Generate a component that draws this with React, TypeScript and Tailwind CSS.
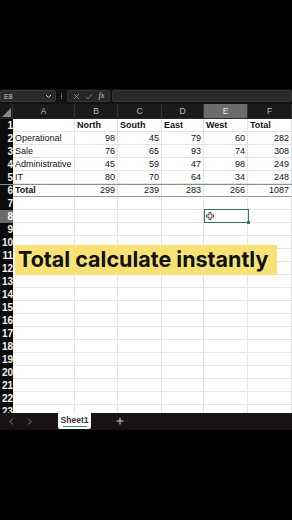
import React from "react";

const W = [13, 62, 43, 44, 42, 44, 44];
const COLS = ["A", "B", "C", "D", "E", "F"];

type Cell = { t: string; b?: boolean; r?: boolean };
const data: Cell[][] = [
  [{ t: "" }, { t: "North", b: true }, { t: "South", b: true }, { t: "East", b: true }, { t: "West", b: true }, { t: "Total", b: true }],
  [{ t: "Operational" }, { t: "98", r: true }, { t: "45", r: true }, { t: "79", r: true }, { t: "60", r: true }, { t: "282", r: true }],
  [{ t: "Sale" }, { t: "76", r: true }, { t: "65", r: true }, { t: "93", r: true }, { t: "74", r: true }, { t: "308", r: true }],
  [{ t: "Administrative" }, { t: "45", r: true }, { t: "59", r: true }, { t: "47", r: true }, { t: "98", r: true }, { t: "249", r: true }],
  [{ t: "IT" }, { t: "80", r: true }, { t: "70", r: true }, { t: "64", r: true }, { t: "34", r: true }, { t: "248", r: true }],
  [{ t: "Total", b: true }, { t: "299", r: true }, { t: "239", r: true }, { t: "283", r: true }, { t: "266", r: true }, { t: "1087", r: true }],
];

export default function App() {
  const rows = Array.from({ length: 23 }, (_, i) => i + 1);
  return (
    <div className="w-[292px] h-[520px] bg-black overflow-hidden flex flex-col" style={{ fontFamily: '"Liberation Sans", Arial, sans-serif' }}>
      <div className="h-[89px] shrink-0 bg-black" />
      {/* formula bar */}
      <div className="h-[15px] shrink-0 flex items-start bg-[#111111] pt-[1px]">
        <div className="w-[56px] h-[12px] bg-[#2a2a2a] border border-[#3a3a3a] rounded-[2px] flex items-center justify-between px-[3px]">
          <span className="text-[7px] text-[#cfcfcf] leading-none">E8</span>
          <svg width="7" height="5" viewBox="0 0 7 5"><path d="M1 1l2.5 2.5L6 1" stroke="#cfcfcf" strokeWidth="1" fill="none" /></svg>
        </div>
        <div className="w-[11px] h-[12px] flex flex-col items-center justify-center gap-[1px]">
          <div className="w-[1.5px] h-[1.5px] bg-[#aaa] rounded-full" />
          <div className="w-[1.5px] h-[1.5px] bg-[#aaa] rounded-full" />
          <div className="w-[1.5px] h-[1.5px] bg-[#aaa] rounded-full" />
        </div>
        <div className="w-[43px] h-[12px] bg-[#262626] border border-[#363636] rounded-[2px] flex items-center justify-around px-[2px]">
          <svg width="7" height="7" viewBox="0 0 7 7"><path d="M1 1l5 5M6 1l-5 5" stroke="#8a8a8a" strokeWidth="0.9" /></svg>
          <svg width="8" height="7" viewBox="0 0 8 7"><path d="M1 3.8l2 2L7 1" stroke="#8a8a8a" strokeWidth="0.9" fill="none" /></svg>
          <span className="text-[8px] italic text-[#cfcfcf] leading-none" style={{ fontFamily: '"Liberation Serif", serif' }}>fx</span>
        </div>
        <div className="flex-1 h-[12px] ml-[2px] bg-[#2a2a2a] border border-[#363636] rounded-[2px]" />
      </div>
      {/* column headers */}
      <div className="h-[15px] shrink-0 flex bg-[#1a1a1a] border-b border-[#2a2a2a]">
        <div className="relative h-full border-r border-[#333]" style={{ width: W[0] }}>
          <svg className="absolute right-[1px] bottom-[1px]" width="9" height="9" viewBox="0 0 9 9"><path d="M9 0V9H0Z" fill="#8a8a8a" /></svg>
        </div>
        {COLS.map((c, i) => (
          <div
            key={c}
            className={`h-full flex items-center justify-center text-[8.5px] border-r border-[#333] ${c === "E" ? "bg-[#6b6b6b] text-[#e8e8e8]" : "text-[#bdbdbd]"}`}
            style={{ width: W[i + 1] }}
          >
            {c}
          </div>
        ))}
      </div>
      {/* grid */}
      <div className="relative h-[294px] shrink-0 overflow-hidden">
        {rows.map((r) => {
          const d = data[r - 1];
          const isTotal = r === 6;
          return (
            <div key={r} className={`flex h-[13px] ${isTotal ? "border-t border-[#8f8f8f]" : ""}`}>
              <div
                className={`h-full overflow-hidden flex items-center justify-end text-[10px] font-bold leading-none ${r === 8 ? "bg-[#6b6b6b] text-white" : "bg-[#0b0b0b] text-[#f2f2f2]"}`}
                style={{ width: W[0] }}
              >
                <span className="whitespace-nowrap">{r}</span>
              </div>
              {COLS.map((c, i) => {
                const cell = d ? d[i] : undefined;
                return (
                  <div
                    key={c}
                    className={`h-full bg-white border-r border-b flex items-center px-[2px] text-[9px] leading-none text-[#111] whitespace-nowrap overflow-hidden ${isTotal ? "border-b-[#9a9a9a]" : "border-b-[#e3e3e3]"} border-r-[#e3e3e3] ${cell?.r ? "justify-end" : "justify-start"} ${cell?.b ? "font-bold" : ""}`}
                    style={{ width: W[i + 1] }}
                  >
                    {cell?.t}
                  </div>
                );
              })}
            </div>
          );
        })}
        {/* selected cell E8 */}
        <div className="absolute left-[204px] top-[90px] w-[45px] h-[14px] border border-[#2f7a55]">
          <div className="absolute -right-[2px] -bottom-[2px] w-[3px] h-[3px] bg-[#2f7a55]" />
          <svg className="absolute left-[1px] top-[2px]" width="8" height="8" viewBox="0 0 8 8">
            <path d="M3 0.5h2v2.5h2.5v2H5v2.5H3V5H0.5V3H3Z" fill="white" stroke="#222" strokeWidth="0.8" />
          </svg>
        </div>
        {/* banner */}
        <div className="absolute left-[15px] top-[126px] w-[262px] h-[30px] bg-[#f8e275] flex items-center pl-[3px]">
          <span className="text-[21.5px] font-bold text-[#111] leading-none whitespace-nowrap" style={{ fontFamily: 'Inter, "Noto Sans", sans-serif' }}>
            Total calculate instantly
          </span>
        </div>
      </div>
      {/* sheet tabs bar */}
      <div className="h-[17px] shrink-0 bg-[#1a1215] flex items-center relative">
        <svg className="absolute left-[9px] top-[5px]" width="5" height="7" viewBox="0 0 5 7"><path d="M4 0.5L1 3.5L4 6.5" stroke="#8a8a8a" strokeWidth="0.9" fill="none" /></svg>
        <svg className="absolute left-[27px] top-[5px]" width="5" height="7" viewBox="0 0 5 7"><path d="M1 0.5L4 3.5L1 6.5" stroke="#8a8a8a" strokeWidth="0.9" fill="none" /></svg>
        <div className="absolute left-[58px] top-0 w-[33px] h-[16px] bg-white rounded-b-[2px] flex flex-col items-center justify-center">
          <span className="text-[8.5px] font-bold text-[#333] leading-none mt-[1px]">Sheet1</span>
          <div className="w-[24px] h-[1px] bg-[#3a8a68] mt-[2px]" />
        </div>
        <svg className="absolute left-[116px] top-[4px]" width="8" height="8" viewBox="0 0 8 8"><path d="M4 0.5v7M0.5 4h7" stroke="#d0d0d0" strokeWidth="1" /></svg>
      </div>
      <div className="flex-1 bg-black" />
    </div>
  );
}
